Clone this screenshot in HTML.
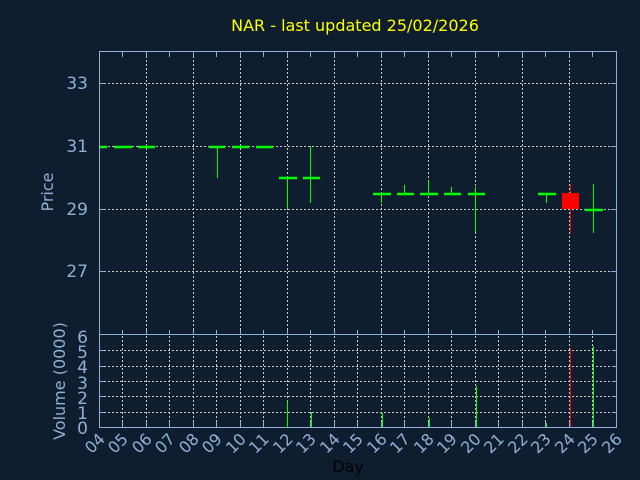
<!DOCTYPE html><html><head><style>body{margin:0;background:#0f1e2f}svg{display:block}</style></head><body>
<svg width="640" height="480" xmlns="http://www.w3.org/2000/svg" font-family="DejaVu Sans, Liberation Sans, sans-serif">
<rect width="640" height="480" fill="#0f1e2f"/>
<text x="355" y="31" fill="#ffff00" font-size="16" text-anchor="middle">NAR - last updated 25/02/2026</text>
<g stroke="#c8c8c8" stroke-dasharray="2,2" stroke-width="1">
<path d="M100 83.5H616M100 146.5H616M100 209.5H616M100 271.5H616"/>
<path d="M146.5 52V334M193.5 52V334M240.5 52V334M287.5 52V334M334.5 52V334M381.5 52V334M428.5 52V334M475.5 52V334M522.5 52V334M569.5 52V334"/>
<path d="M100 412.5H616M100 396.5H616M100 381.5H616M100 366.5H616M100 350.5H616"/>
<path d="M122.5 336V427M146.5 336V427M169.5 336V427M193.5 336V427M216.5 336V427M240.5 336V427M263.5 336V427M287.5 336V427M310.5 336V427M334.5 336V427M357.5 336V427M381.5 336V427M404.5 336V427M428.5 336V427M451.5 336V427M475.5 336V427M498.5 336V427M522.5 336V427M545.5 336V427M569.5 336V427M592.5 336V427"/>
</g>
<g fill="none" stroke="#8fb0d8" stroke-width="1">
<rect x="99.5" y="51.5" width="517" height="283"/>
<rect x="99.5" y="334.5" width="517" height="93"/>
</g>
<g stroke="#8fb0d8" stroke-width="1" id="ticks">
<path d="M99.5 52v5M122.5 52v5M146.5 52v5M169.5 52v5M193.5 52v5M216.5 52v5M240.5 52v5M263.5 52v5M287.5 52v5M310.5 52v5M334.5 52v5M357.5 52v5M381.5 52v5M404.5 52v5M428.5 52v5M451.5 52v5M475.5 52v5M498.5 52v5M522.5 52v5M545.5 52v5M569.5 52v5M592.5 52v5"/>
<path d="M99.5 335v-5M122.5 335v-5M146.5 335v-5M169.5 335v-5M193.5 335v-5M216.5 335v-5M240.5 335v-5M263.5 335v-5M287.5 335v-5M310.5 335v-5M334.5 335v-5M357.5 335v-5M381.5 335v-5M404.5 335v-5M428.5 335v-5M451.5 335v-5M475.5 335v-5M498.5 335v-5M522.5 335v-5M545.5 335v-5M569.5 335v-5M592.5 335v-5"/>
<path d="M99.5 427v-5M122.5 427v-5M146.5 427v-5M169.5 427v-5M193.5 427v-5M216.5 427v-5M240.5 427v-5M263.5 427v-5M287.5 427v-5M310.5 427v-5M334.5 427v-5M357.5 427v-5M381.5 427v-5M404.5 427v-5M428.5 427v-5M451.5 427v-5M475.5 427v-5M498.5 427v-5M522.5 427v-5M545.5 427v-5M569.5 427v-5M592.5 427v-5"/>
<path d="M100 83.5h5M100 146.5h5M100 209.5h5M100 271.5h5M616 83.5h-5M616 146.5h-5M616 209.5h-5M616 271.5h-5M100 412.5h4M100 396.5h4M100 381.5h4M100 366.5h4M100 350.5h4M616 412.5h-4M616 396.5h-4M616 381.5h-4M616 366.5h-4M616 350.5h-4"/>
</g>
<g fill="#8fb0d8" font-size="17" text-anchor="end">
<text x="88" y="89">33</text><text x="88" y="152">31</text><text x="88" y="215">29</text><text x="88" y="277">27</text>
<text x="88" y="343">6</text><text x="88" y="358">5</text><text x="88" y="373">4</text><text x="88" y="389">3</text><text x="88" y="404">2</text><text x="88" y="419">1</text><text x="88" y="434">0</text>
</g>
<text transform="translate(53,192) rotate(-90)" fill="#8fb0d8" font-size="16" text-anchor="middle">Price</text>
<text transform="translate(65,381) rotate(-90)" fill="#8fb0d8" font-size="16" text-anchor="middle">Volume (0000)</text>
<g fill="#8fb0d8" font-size="16" text-anchor="end">
<text transform="translate(106,440) rotate(-45)">04</text><text transform="translate(129,440) rotate(-45)">05</text><text transform="translate(153,440) rotate(-45)">06</text><text transform="translate(176,440) rotate(-45)">07</text><text transform="translate(200,440) rotate(-45)">08</text><text transform="translate(223,440) rotate(-45)">09</text><text transform="translate(247,440) rotate(-45)">10</text><text transform="translate(270,440) rotate(-45)">11</text><text transform="translate(294,440) rotate(-45)">12</text><text transform="translate(317,440) rotate(-45)">13</text><text transform="translate(341,440) rotate(-45)">14</text><text transform="translate(364,440) rotate(-45)">15</text><text transform="translate(388,440) rotate(-45)">16</text><text transform="translate(411,440) rotate(-45)">17</text><text transform="translate(435,440) rotate(-45)">18</text><text transform="translate(458,440) rotate(-45)">19</text><text transform="translate(482,440) rotate(-45)">20</text><text transform="translate(505,440) rotate(-45)">21</text><text transform="translate(529,440) rotate(-45)">22</text><text transform="translate(552,440) rotate(-45)">23</text><text transform="translate(576,440) rotate(-45)">24</text><text transform="translate(599,440) rotate(-45)">25</text><text transform="translate(623,440) rotate(-45)">26</text>
</g>
<text x="348" y="472" fill="#000" font-size="16" text-anchor="middle">Day</text>
<g stroke="#00ff00" stroke-width="1">
<path d="M217.5 146V178M287.5 178V209M310.5 146V203M381.5 194V203M404.5 185V194M428.5 181V194M451.5 187V194M475.5 187V232M546.5 194V203M593.5 184V233"/>
</g>
<g stroke="#00ff00" stroke-width="2.5">
<path d="M100 147H107M114 147H132M138 147H155M209 147H225M232 147H249M256 147H273M279 178H297M303 178H320M373 194H391M397 194H414M420 194H438M444 194H461M468 194H485M538 194H556M585 210H603"/>
</g>
<path d="M570.5 184V233" stroke="#ff0000" stroke-width="1"/>
<rect x="562" y="193" width="17" height="16" fill="#ff0000"/>
<g stroke="#00ff00" stroke-width="1">
<path d="M287.5 427V401M311.5 427V412M382.5 427V413M429.5 427V418M476.5 427V386M546.5 427V423M593.5 427V346"/>
</g>
<path d="M570.5 427V348" stroke="#ff0000" stroke-width="1"/>
</svg>
</body></html>
